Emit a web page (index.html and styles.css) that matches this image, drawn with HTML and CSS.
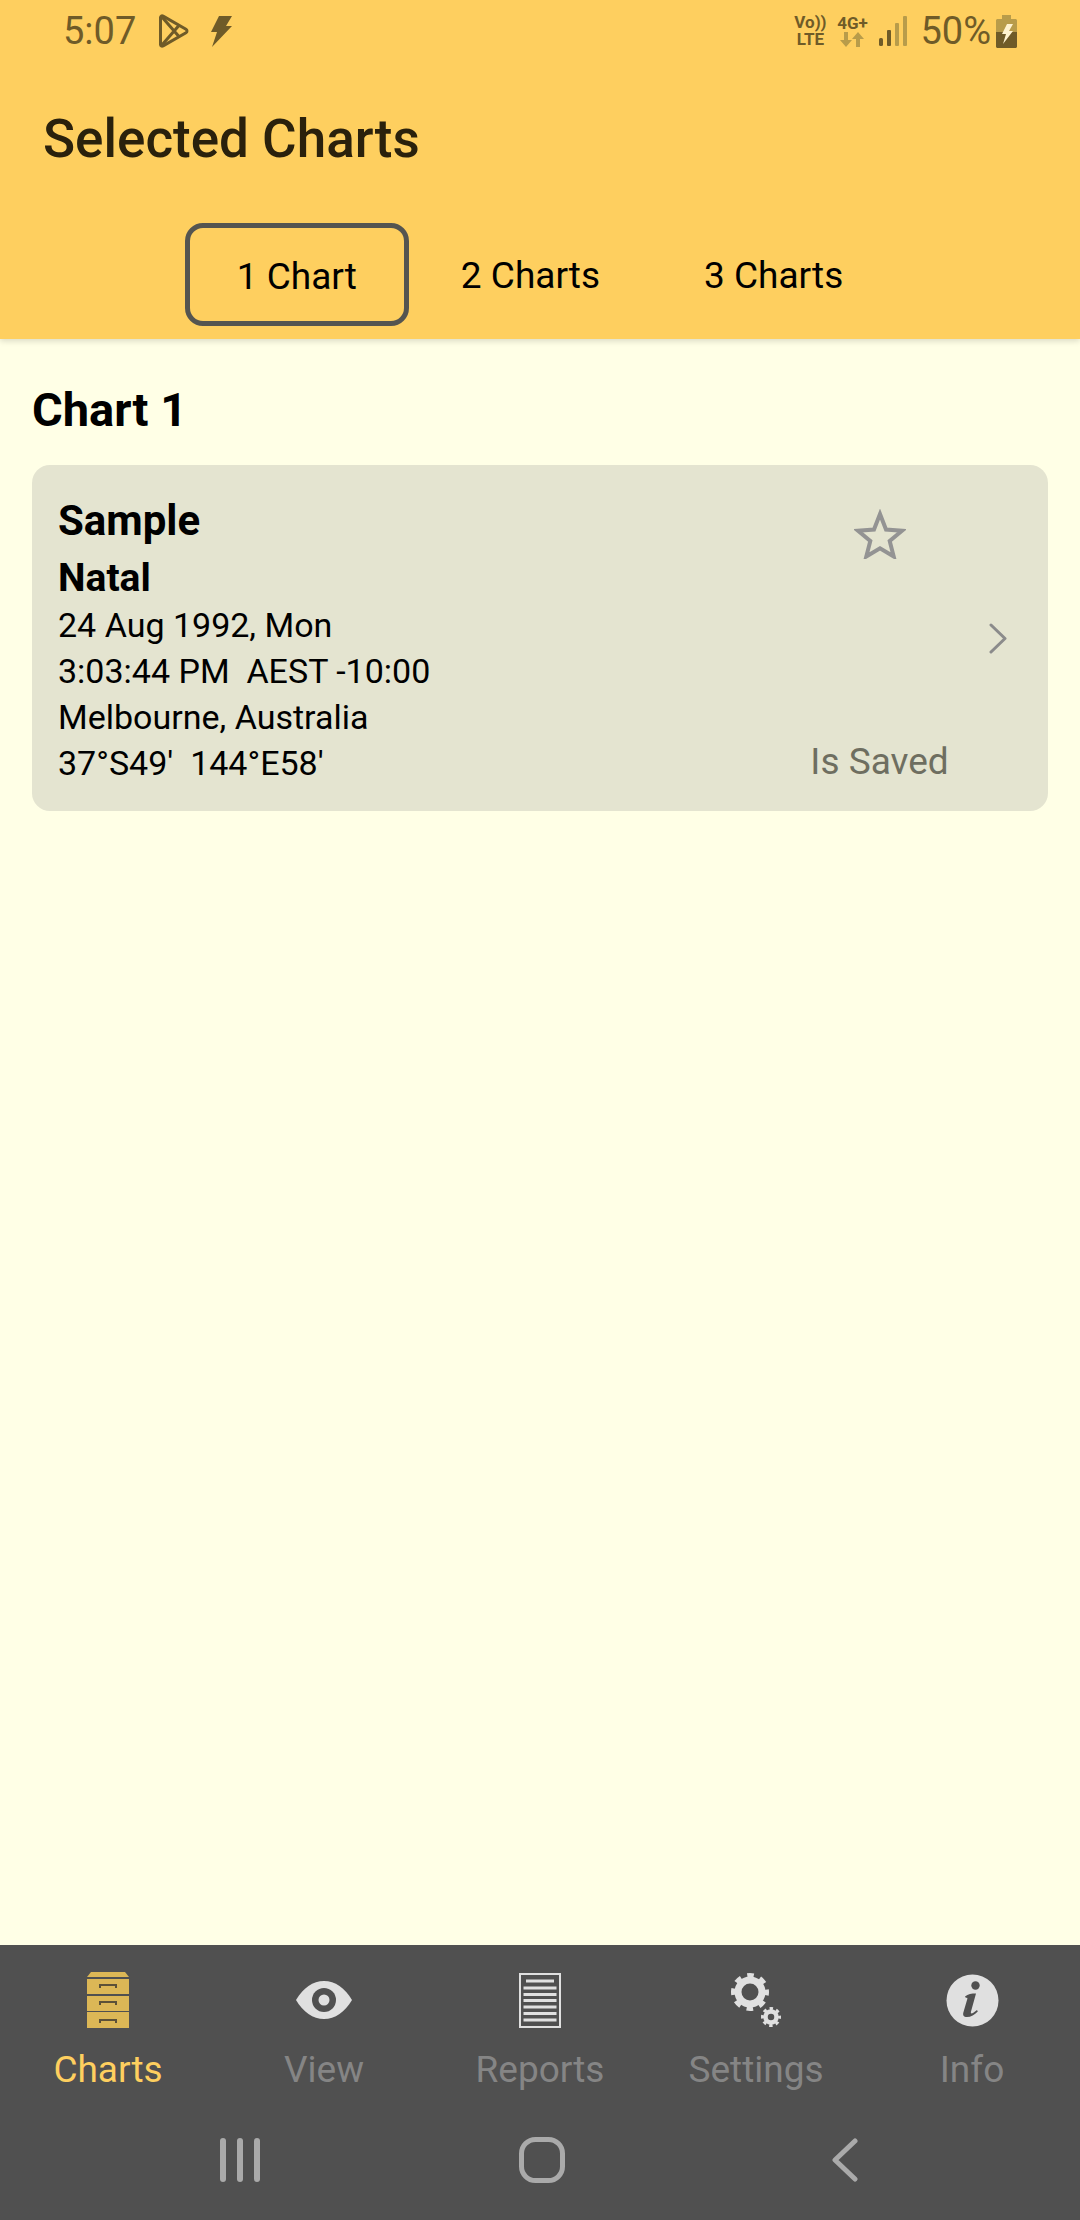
FILE: index.html

```html
<!DOCTYPE html>
<html lang="en">
<head>
    <meta charset="UTF-8">
    <meta name="viewport" content="width=device-width, initial-scale=1.0">
    <title>Selected Charts</title>
    <link rel="stylesheet" href="styles.css">
</head>
<body>

    <div class="app">
        <header class="app-header">
            <div class="status-bar">
                <span class="status-time">5:07</span>
                <svg class="icon-play" width="31" height="34" viewBox="0 0 30 34" fill="none" stroke="#6f5b28" stroke-width="3" stroke-linejoin="round">
                    <path d="M2 3.500c0-1.500 1.300-2.100 2.600-1.400L27.500 15.200c1.300.8 1.300 2.700 0 3.500L4.600 31.900C3.300 32.600 2 32 2 30.500z"/>
                    <path d="M3 2.500L20 22M3 31.500L20 12"/>
                </svg>
                <svg class="icon-bolt" width="21" height="31" viewBox="0 0 21 31" fill="#6f5b28">
                    <path d="M8 0h13l-6 10h6L1 31l5-15H0z"/>
                </svg>
                <div class="status-right">
                    <div class="net-label">
                        <span>Vo))</span>
                        <span>LTE</span>
                    </div>
                    <div class="net-label net-4g">
                        <span>4G+</span>
                        <svg width="24" height="15" viewBox="0 0 24 15" fill="#b89c4a">
                            <path d="M4 0h4v8h4l-6 7-6-7h4zM16 15h4V7h4l-6-7-6 7h4z"/>
                        </svg>
                    </div>
                    <svg class="icon-signal" width="28" height="30" viewBox="0 0 28 30">
                        <rect x="0" y="22" width="4" height="8" rx="1.500" fill="#6f5b28"/>
                        <rect x="8" y="14" width="4" height="16" rx="1" fill="#6f5b28"/>
                        <rect x="16" y="7" width="4" height="23" rx="1" fill="#b89c4a"/>
                        <rect x="24" y="0" width="4" height="30" rx="1" fill="#b89c4a"/>
                    </svg>
                    <span class="status-battery-text">50%</span>
                    <svg class="icon-battery" width="21" height="33" viewBox="0 0 21 33">
                        <path d="M6 0h9v4h4.500c.8 0 1.500.7 1.500 1.500V17H0V5.500C0 4.700.7 4 1.500 4H6z" fill="#b89c4a"/>
                        <path d="M0 17h21v14.500c0 .8-.7 1.500-1.500 1.500h-18C.7 33 0 32.300 0 31.500z" fill="#6f5b28"/>
                        <path d="M11 9h6l-4 7h4L7 29l3-10H6z" fill="#fff3cf"/>
                    </svg>
                </div>
            </div>

            <h1 class="app-title">Selected Charts</h1>

            <div class="segments">
                <div class="segment segment-active">1 Chart</div>
                <div class="segment">2 Charts</div>
                <div class="segment">3 Charts</div>
            </div>
        </header>

        <main class="content">
            <h2 class="section-title">Chart 1</h2>

            <div class="chart-card">
                <div class="chart-info">
                    <p class="chart-name">Sample</p>
                    <p class="chart-type">Natal</p>
                    <p class="chart-line">24 Aug 1992, Mon</p>
                    <p class="chart-line">3:03:44 PM&nbsp; AEST -10:00</p>
                    <p class="chart-line">Melbourne, Australia</p>
                    <p class="chart-line">37°S49'&nbsp; 144°E58'</p>
                </div>
                <div class="chart-side">
                    <svg class="icon-star" width="52" height="50" viewBox="0 0 52 50" fill="none" stroke="#939393" stroke-width="4">
                        <path d="M26 5l6 15.500 16 1.200-12.300 10.300 4 15.500L26 39.300 12.300 47.500l4-15.500L4 21.700l16-1.200z"/>
                    </svg>
                    <span class="saved-label">Is Saved</span>
                </div>
                <svg class="icon-chevron" width="18" height="31" viewBox="0 0 18 31" fill="none" stroke="#8b8b8b" stroke-width="3" stroke-linecap="round" stroke-linejoin="round">
                    <path d="M2 2l14 13.500L2 29"/>
                </svg>
            </div>
        </main>

        <footer class="app-footer">
            <nav class="tab-bar">
                <div class="tab tab-active">
                    <div class="tab-icon">
                        <svg width="44" height="56" viewBox="0 0 44 56">
                            <path d="M5 0h34l4 5H1z" fill="#dcb756"/>
                            <rect x="1" y="7" width="42" height="15" fill="#dcb756"/>
                            <rect x="1" y="24" width="42" height="15" fill="#dcb756"/>
                            <rect x="1" y="40" width="42" height="16" fill="#dcb756"/>
                            <path d="M14 16v-3h16v3M14 33v-3h16v3M14 51v-3h16v3" fill="none" stroke="#5c5138" stroke-width="2"/>
                        </svg>
                    </div>
                    <span class="tab-label">Charts</span>
                </div>
                <div class="tab">
                    <div class="tab-icon">
                        <svg width="58" height="40" viewBox="0 0 58 40">
                            <path d="M1 20C8 8 18 1 29 1s21 7 28 19c-7 12-17 19-28 19S8 32 1 20z" fill="#e0e0e0"/>
                            <circle cx="29" cy="20" r="12" fill="#505050"/>
                            <circle cx="29" cy="20" r="5.500" fill="#e0e0e0"/>
                        </svg>
                    </div>
                    <span class="tab-label">View</span>
                </div>
                <div class="tab">
                    <div class="tab-icon">
                        <svg width="42" height="55" viewBox="0 0 42 55">
                            <rect x="1" y="1" width="40" height="53" fill="none" stroke="#e0e0e0" stroke-width="2"/>
                            <path d="M7 8h28M4.500 15h33M4.500 21.500h33M4.500 27.500h33M4.500 34h33M4.500 40.500h33M4.500 47h33" stroke="#e0e0e0" stroke-width="3"/>
                        </svg>
                    </div>
                    <span class="tab-label">Reports</span>
                </div>
                <div class="tab">
                    <div class="tab-icon">
                        <svg width="50" height="54" viewBox="0 0 50 54" fill="none" stroke="#e0e0e0">
                            <circle cx="19" cy="19" r="12" stroke-width="7"/>
                            <circle cx="19" cy="19" r="16.500" stroke-width="5" stroke-dasharray="6.500 6.460" stroke-dashoffset="3.250"/>
                            <circle cx="40" cy="44" r="5.500" stroke-width="4.500"/>
                            <circle cx="40" cy="44" r="8.500" stroke-width="3" stroke-dasharray="3.400 3.280" stroke-dashoffset="1.700"/>
                        </svg>
                    </div>
                    <span class="tab-label">Settings</span>
                </div>
                <div class="tab">
                    <div class="tab-icon">
                        <svg width="53" height="53" viewBox="0 0 53 53">
                            <circle cx="26.500" cy="26.500" r="26" fill="#e0e0e0"/>
                            <circle cx="29.500" cy="11.500" r="4.200" fill="#505050"/>
                            <path d="M19 22.500c3-2.500 6.500-3 11-3l-5 18c-.5 2 .5 2.500 2 1.500l4-3 .8 1.500C28.500 41 25 43 21 43c-3.500 0-4.500-2-3.500-5l3.800-13c.3-1.200-.3-1.500-1.300-1z" fill="#505050"/>
                        </svg>
                    </div>
                    <span class="tab-label">Info</span>
                </div>
            </nav>

            <div class="nav-bar">
                <svg width="40" height="44" viewBox="0 0 40 44" fill="#aaaaaa">
                    <rect x="0" y="0" width="6" height="44" rx="3"/>
                    <rect x="17" y="0" width="6" height="44" rx="3"/>
                    <rect x="34" y="0" width="6" height="44" rx="3"/>
                </svg>
                <svg class="nav-home" width="46" height="46" viewBox="0 0 46 46" fill="none" stroke="#aaaaaa" stroke-width="5">
                    <rect x="2.500" y="2.500" width="41" height="41" rx="14"/>
                </svg>
                <svg width="26" height="44" viewBox="0 0 26 44" fill="none" stroke="#aaaaaa" stroke-width="5" stroke-linecap="round" stroke-linejoin="round">
                    <path d="M23 3L3 22l20 19"/>
                </svg>
            </div>
        </footer>
    </div>

</body>
</html>
```

FILE: styles.css

```css
* {
    box-sizing: border-box;
}

body {
    margin: 0;
    font-family: 'Roboto', sans-serif;
    background-color: #ffffe6;
}

p,
h1,
h2 {
    margin: 0;
}

.app {
    display: flex;
    flex-direction: column;
    width: 1080px;
    height: 2220px;
    overflow: hidden;
}

/* header */

.app-header {
    height: 339px;
    background-color: #fecf5f;
    box-shadow: 0 2px 6px rgba(0, 0, 0, 0.15);
    position: relative;
}

.status-bar {
    display: flex;
    align-items: center;
    height: 62px;
    padding: 0 63px;
    color: #6f5b28;
}

.status-time {
    font-size: 38px;
    width: 95px;
}

.icon-bolt {
    margin-left: 22px;
}

.status-right {
    display: flex;
    align-items: center;
    margin-left: auto;
}

.net-label {
    display: flex;
    flex-direction: column;
    align-items: center;
    width: 32px;
    margin-right: 10px;
    font-size: 17px;
    font-weight: 700;
    line-height: 17px;
    white-space: nowrap;
}

.net-4g svg {
    display: block;
}

.icon-signal {
    margin-left: 1px;
}

.status-battery-text {
    font-size: 38px;
    margin-left: 13px;
    margin-right: 5px;
}

.app-title {
    margin: 47px 0 0 43px;
    font-size: 53px;
    line-height: 60px;
    font-weight: 500;
    color: #2a210c;
}

.segments {
    display: flex;
    justify-content: center;
    margin-top: 54px;
}

.segment {
    height: 103px;
    padding: 0 52px;
    font-size: 37px;
    line-height: 105px;
    color: #000;
}

.segment-active {
    padding: 0 47px;
    border: 5px solid #555550;
    border-radius: 18px;
    line-height: 97px;
}

/* content */

.content {
    flex: 1;
    padding: 43px 32px 0;
}

.section-title {
    font-size: 47px;
    line-height: 56px;
    font-weight: 700;
    color: #000;
}

.chart-card {
    display: flex;
    height: 346px;
    margin-top: 27px;
    padding: 29px 41px 29px 26px;
    background-color: #e4e4d0;
    border-radius: 18px;
}

.chart-info {
    flex: 1;
    color: #000;
}

.chart-name,
.chart-type {
    font-size: 42px;
    line-height: 54px;
    font-weight: 700;
}

.chart-type {
    margin: 3px 0 -3px;
    font-size: 39px;
}

.chart-line {
    font-size: 34px;
    line-height: 46px;
}

.chart-side {
    display: flex;
    flex-direction: column;
    justify-content: space-between;
    align-items: center;
    width: 137px;
    margin-right: 41px;
}

.icon-star {
    margin-top: 15px;
}

.saved-label {
    margin-bottom: -2px;
    font-size: 37px;
    line-height: 44px;
    color: #6e6e60;
    white-space: nowrap;
}

.icon-chevron {
    align-self: center;
}

/* bottom bars */

.app-footer {
    height: 275px;
    background-color: #505050;
}

.tab-bar {
    display: grid;
    grid-template-columns: repeat(5, 216px);
    height: 180px;
}

.tab {
    display: flex;
    flex-direction: column;
    align-items: center;
    padding-top: 27px;
}

.tab-icon {
    display: flex;
    justify-content: center;
    align-items: center;
    height: 56px;
}

.tab-label {
    margin-top: 20px;
    font-size: 37px;
    line-height: 44px;
    color: #858585;
}

.tab-active .tab-label {
    color: #fecf5f;
}

.nav-bar {
    display: flex;
    align-items: center;
    height: 70px;
    padding-left: 220px;
}

.nav-home {
    margin: 0 267px 0 259px;
}
```
